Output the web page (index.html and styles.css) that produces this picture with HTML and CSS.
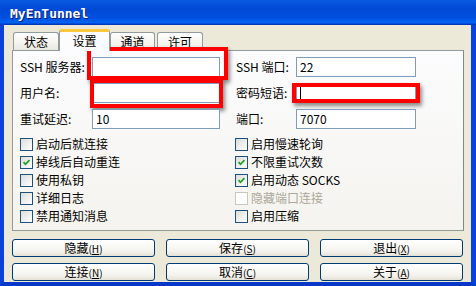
FILE: index.html
```html
<!DOCTYPE html>
<html lang="zh-CN">
<head>
  <meta charset="UTF-8">
  <title>MyEnTunnel</title>
  <link rel="stylesheet" href="styles.css">
</head>
<body>

  <div class="window">
    <div class="titlebar"><span class="title">MyEnTunnel</span></div>

    <div class="client">
      <div class="tabs">
        <div class="tab first">状态</div>
        <div class="tab active">设置</div>
        <div class="tab">通道</div>
        <div class="tab last">许可</div>
      </div>

      <div class="panel">
        <div class="fields">
          <label class="lbl">SSH 服务器:</label>
          <div class="field"><div class="input"></div><div class="mark mark-host"></div></div>
          <label class="lbl right">SSH 端口:</label>
          <div class="field"><div class="input">22</div></div>

          <label class="lbl">用户名:</label>
          <div class="field"><div class="input"></div><div class="mark mark-user"></div></div>
          <label class="lbl right">密码短语:</label>
          <div class="field"><div class="input"><span class="caret"></span></div><div class="mark mark-pass"></div></div>

          <label class="lbl">重试延迟:</label>
          <div class="field"><div class="input">10</div></div>
          <label class="lbl right">端口:</label>
          <div class="field"><div class="input">7070</div></div>
        </div>

        <div class="checks">
          <div class="check"><span class="box"></span>启动后就连接</div>
          <div class="check"><span class="box"></span>启用慢速轮询</div>

          <div class="check"><span class="box"><svg viewBox="0 0 13 13"><path d="M3 6 L5.3 8.6 L10 3.6"/></svg></span>掉线后自动重连</div>
          <div class="check"><span class="box"><svg viewBox="0 0 13 13"><path d="M3 6 L5.3 8.6 L10 3.6"/></svg></span>不限重试次数</div>

          <div class="check"><span class="box"></span>使用私钥</div>
          <div class="check"><span class="box"><svg viewBox="0 0 13 13"><path d="M3 6 L5.3 8.6 L10 3.6"/></svg></span>启用动态 SOCKS</div>

          <div class="check"><span class="box"></span>详细日志</div>
          <div class="check disabled"><span class="box"></span>隐藏端口连接</div>

          <div class="check"><span class="box"></span>禁用通知消息</div>
          <div class="check"><span class="box"></span>启用压缩</div>
        </div>
      </div>

      <div class="buttons">
        <button>隐藏<span class="key">(<u>H</u>)</span></button>
        <button>保存<span class="key">(<u>S</u>)</span></button>
        <button>退出<span class="key">(<u>X</u>)</span></button>
        <button>连接<span class="key">(<u>N</u>)</span></button>
        <button>取消<span class="key">(<u>C</u>)</span></button>
        <button>关于<span class="key">(<u>A</u>)</span></button>
      </div>
    </div>
  </div>

</body>
</html>
```

FILE: styles.css
```css
body {
  margin: 0;
  font-family: "Noto Sans CJK SC", sans-serif;
  font-size: 12px;
  color: #000;
}

.window {
  width: 476px;
  height: 286px;
  display: flex;
  flex-direction: column;
}

.titlebar {
  height: 25px;
  flex: none;
  background: linear-gradient(#0a5ae0 0%, #0048d6 35%, #0050de 70%, #0062f4 90%, #0040c8 96%, #0030b0 100%);
  display: flex;
  align-items: center;
}

.title {
  padding: 1px 0 0 10px;
  font-family: "DejaVu Sans Mono", monospace;
  font-weight: bold;
  font-size: 13px;
  color: #fff;
  text-shadow: 1px 1px #0a1c78;
}

.client {
  flex: 1;
  background-color: #ece9d8;
  border-left: 4px solid #0842d8;
  border-right: 5px solid #0842d8;
  border-bottom: 4px solid #0838c8;
  padding: 4px 7px 0 8px;
}

/* tabs */
.tabs {
  display: flex;
  align-items: flex-end;
  height: 21px;
  padding-left: 1px;
}

.tab {
  box-sizing: border-box;
  height: 18px;
  width: 46px;
  border: 1px solid #919b9c;
  border-bottom: none;
  border-radius: 3px 3px 0 0;
  background: linear-gradient(#fefefe, #f4f3ee 60%, #e9e8e0);
  text-align: center;
  line-height: 18px;
}

.tab.active {
  position: relative;
  z-index: 1;
  width: 51px;
  height: 22px;
  margin-bottom: -1px;
  background: #fcfcfe;
  border-top: 3px solid #ffc83c;
  line-height: 17px;
}

.tab.last {
  margin-left: 2px;
}

.tab + .tab:not(.active):not(.last) {
  width: 45px;
}

/* panel */
.panel {
  box-sizing: border-box;
  height: 181px;
  border: 1px solid #919b9c;
  border-right-color: #7f8a8b;
  background: linear-gradient(#fcfcfe, #f4f3ee);
  padding: 6px 0 0 7px;
}

.fields {
  display: grid;
  grid-template-columns: 72px 128px 76px 120px;
  grid-auto-rows: 20px;
  row-gap: 6px;
}

.lbl {
  line-height: 20px;
}

.lbl.right {
  padding-left: 16px;
}

.field {
  position: relative;
}

.input {
  box-sizing: border-box;
  height: 20px;
  border: 1px solid #7f9db9;
  background: #fff;
  padding-left: 3px;
  line-height: 18px;
}

.caret {
  display: inline-block;
  width: 1px;
  height: 14px;
  margin-top: 2px;
  vertical-align: top;
  background: #000;
}

.mark {
  position: absolute;
  box-sizing: border-box;
  border: 4px solid #f00;
  box-shadow: 2px 3px 4px rgba(0, 0, 0, 0.45);
}

.mark-host {
  left: -5px;
  right: -8px;
  top: -10px;
  bottom: -3px;
}

.mark-user {
  left: -2px;
  right: -3px;
  top: -4px;
  bottom: -5px;
}

.mark-pass {
  left: -4px;
  right: -4px;
  top: 0;
  bottom: 0;
}

/* checkboxes */
.checks {
  margin-top: 6px;
  display: grid;
  grid-template-columns: 215px 1fr;
  grid-auto-rows: 18px;
}

.check {
  display: flex;
  align-items: center;
  gap: 3px;
  line-height: 18px;
}

.box {
  box-sizing: border-box;
  width: 13px;
  height: 13px;
  border: 1px solid #1c5180;
  background: linear-gradient(135deg, #dcdcd7, #fff);
}

.box svg {
  display: block;
  width: 11px;
  height: 11px;
  margin: 0;
}

.box path {
  fill: none;
  stroke: #21a121;
  stroke-width: 2;
}

.check.disabled {
  color: #aca899;
}

.check.disabled .box {
  border-color: #cac8bb;
  background: #fff;
}

/* buttons */
.buttons {
  margin-top: 8px;
  display: grid;
  grid-template-columns: repeat(3, 143px);
  grid-auto-rows: 18px;
  column-gap: 11px;
  row-gap: 6px;
}

button {
  box-sizing: border-box;
  margin: 0;
  padding: 0;
  border: 1px solid #003c74;
  border-radius: 3px;
  background: linear-gradient(#fff, #f4f3ee 70%, #e3e1d6);
  font-family: "Noto Sans CJK SC", sans-serif;
  font-size: 12px;
  line-height: 16px;
  color: #000;
}

.key {
  font-size: 10px;
}
```
